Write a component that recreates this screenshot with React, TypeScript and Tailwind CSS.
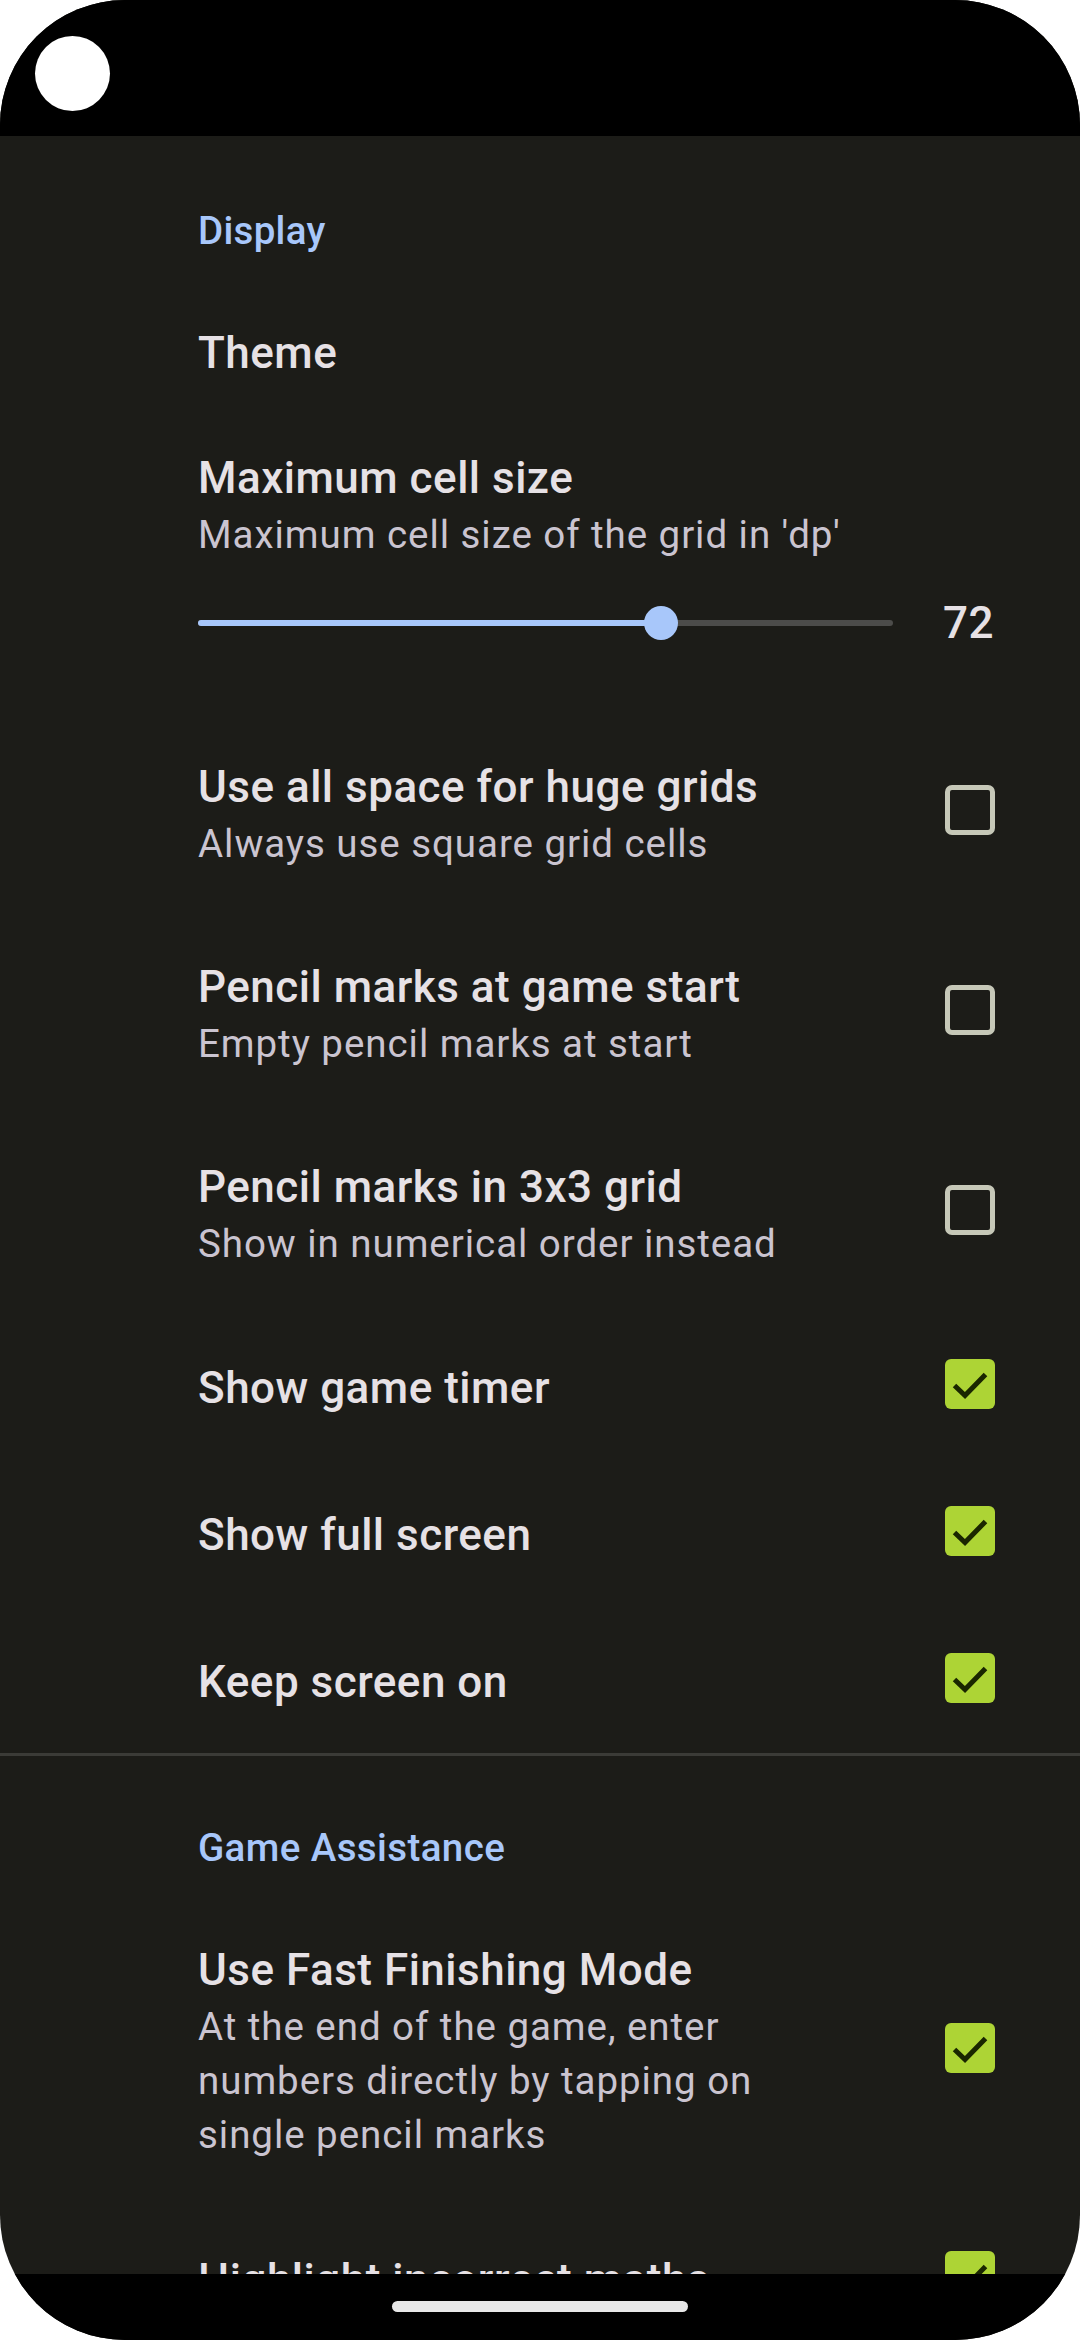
import React from "react";

function Box({ checked }: { checked: boolean }) {
  if (checked) {
    return (
      <div className="w-[50px] h-[50px] rounded-[6px] bg-[#add435] shrink-0">
        <svg width="50" height="50" viewBox="0 0 50 50">
          <path d="M9.5 26.5 L20 36.5 L40.5 15.5" fill="none" stroke="#1a2600" strokeWidth="5" />
        </svg>
      </div>
    );
  }
  return <div className="w-[50px] h-[50px] rounded-[7px] border-[5px] border-[#c6c8b8] shrink-0" />;
}

function Title({ children }: { children: React.ReactNode }) {
  return (
    <div className="text-[44px] leading-[60px] font-medium tracking-[0.5px] text-[#e6e1e5] whitespace-nowrap">
      {children}
    </div>
  );
}

function Sub({ children, multi }: { children: React.ReactNode; multi?: boolean }) {
  return (
    <div
      className={
        multi
          ? "text-[38.5px] leading-[54px] tracking-[0.95px] text-[#cac4d0]"
          : "text-[38.5px] leading-[53px] tracking-[0.95px] text-[#cac4d0] whitespace-nowrap"
      }
    >
      {children}
    </div>
  );
}

function TwoLine({ title, sub, checked }: { title: string; sub: string; checked: boolean }) {
  return (
    <div className="flex items-center pl-[198px] pr-[85px]">
      <div className="flex-1 pt-[47px] pb-[40px]">
        <Title>{title}</Title>
        <Sub>{sub}</Sub>
      </div>
      <Box checked={checked} />
    </div>
  );
}

function CheckLine({ title, checked }: { title: string; checked: boolean }) {
  return (
    <div className="flex items-center pl-[198px] pr-[85px]">
      <div className="flex-1 pt-[48px] pb-[39px]">
        <Title>{title}</Title>
      </div>
      <Box checked={checked} />
    </div>
  );
}

export default function App() {
  return (
    <div className="w-[1080px] h-[2340px] bg-white font-['Roboto','Noto_Sans',sans-serif]">
      <div className="w-full h-full rounded-[125px] overflow-hidden bg-[#1c1c18] flex flex-col">
        <div className="h-[136px] bg-black shrink-0 pl-[35px] pt-[36px]">
          <div className="w-[75px] h-[75px] rounded-full bg-white" />
        </div>
        <div className="flex-1 overflow-hidden">
          <div className="pl-[198px] pt-[68px] pb-[22px] text-[38.5px] leading-[53px] font-medium tracking-[0.3px] text-[#a8c7fa]">
            Display
          </div>
          <div className="pl-[198px] pr-[85px] pt-[44px] pb-[43px]">
            <Title>Theme</Title>
          </div>
          <div className="pl-[198px] pr-[85px] pt-[22px] pb-[67px]">
            <Title>Maximum cell size</Title>
            <Sub>Maximum cell size of the grid in 'dp'</Sub>
            <div className="mt-[42px] h-[40px] flex items-center">
              <div className="relative w-[695px] h-[6px] rounded-full bg-[#4c4c4a]">
                <div className="h-full w-[463px] rounded-full bg-[#a8c7fa]" />
                <div className="absolute left-[446px] top-[-14px] w-[34px] h-[34px] rounded-full bg-[#a8c7fa]" />
              </div>
              <div className="ml-[50px] text-[44px] leading-[40px] font-medium tracking-[0.5px] text-[#e6e1e5]">72</div>
            </div>
          </div>
          <TwoLine title="Use all space for huge grids" sub="Always use square grid cells" checked={false} />
          <TwoLine title="Pencil marks at game start" sub="Empty pencil marks at start" checked={false} />
          <TwoLine title="Pencil marks in 3x3 grid" sub="Show in numerical order instead" checked={false} />
          <CheckLine title="Show game timer" checked={true} />
          <CheckLine title="Show full screen" checked={true} />
          <CheckLine title="Keep screen on" checked={true} />
          <div className="mt-[2px] h-[3px] bg-[#3b3b37]" />
          <div className="pl-[198px] pt-[65px] pb-[19px] text-[38.5px] leading-[53px] font-medium tracking-[0.4px] text-[#a8c7fa]">
            Game Assistance
          </div>
          <div className="flex items-center pl-[198px] pr-[85px]">
            <div className="flex-1 pt-[47px] pb-[40px]">
              <Title>Use Fast Finishing Mode</Title>
              <Sub multi>
                At the end of the game, enter
                <br />
                numbers directly by tapping on
                <br />
                single pencil marks
              </Sub>
            </div>
            <Box checked={true} />
          </div>
          <CheckLine title="Highlight incorrect maths" checked={true} />
        </div>
        <div className="h-[66px] bg-black shrink-0 flex justify-center pt-[27px]">
          <div className="w-[296px] h-[11px] rounded-full bg-[#e8e8e8]" />
        </div>
      </div>
    </div>
  );
}
